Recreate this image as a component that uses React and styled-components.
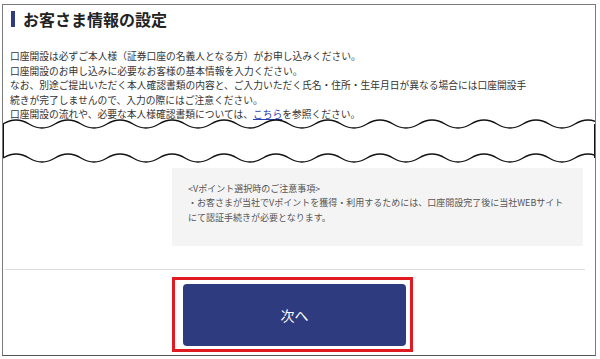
import React from "react";
import styled, { createGlobalStyle } from "styled-components";

const GlobalStyle = createGlobalStyle`
  html, body {
    margin: 0;
    padding: 0;
    background: #ffffff;
  }
  body {
    font-family: "Noto Sans CJK JP", "Noto Sans", sans-serif;
    color: #333333;
  }
`;

const Frame = styled.div`
  box-sizing: border-box;
  margin: 4px 0 0 2px;
  width: 594px;
  height: 352px;
  border: 1px solid #7a7a7a;
  border-bottom-color: #555555;
  background: #ffffff;
  overflow: hidden;
`;

const TopSection = styled.section`
  padding: 6px 0 0 7px;
`;

const Heading = styled.h1`
  display: flex;
  align-items: center;
  gap: 8px;
  margin: 0 0 22px;
  font-size: 16px;
  line-height: 16px;
  font-weight: 700;
  color: #222222;
  &::before {
    content: "";
    display: block;
    width: 4px;
    height: 16px;
    margin-left: 1px;
    background: #2e3b7e;
  }
`;

const Lead = styled.div`
  font-size: 9.75px;
  line-height: 14.5px;
  white-space: nowrap;
  color: #333333;
  p {
    margin: 0;
  }
`;

const TextLink = styled.a`
  color: #2f3fb0;
  text-decoration: underline;
`;

const BreakSvg = styled.svg`
  display: block;
  margin-top: -8px;
  position: relative;
`;

const BottomSection = styled.section`
  display: flex;
  flex-direction: column;
`;

const NoteBox = styled.div`
  margin-left: 169px;
  width: 411px;
  box-sizing: border-box;
  padding: 14px 0 21px 16px;
  background: #f4f4f4;
  font-size: 9px;
  line-height: 14.5px;
  color: #555555;
  white-space: nowrap;
  p {
    margin: 0;
  }
`;

const Divider = styled.hr`
  margin: 23px 10px 0 2px;
  border: 0;
  border-top: 1px solid #dddddd;
`;

const Highlight = styled.div`
  box-sizing: border-box;
  margin: 7px 0 0 169px;
  width: 241px;
  height: 75px;
  border: 3px solid #e01b22;
  padding: 4px 4px 3px 8px;
`;

const NextButton = styled.button`
  width: 223px;
  height: 62px;
  border: 0;
  border-radius: 4px;
  background: #2e3b7e;
  color: #ffffff;
  font-family: "Noto Sans CJK JP", sans-serif;
  font-size: 14px;
  cursor: pointer;
`;

const W = 592;
const H = 54;
const P = 52;
const A = 4;

// builds a sine-like wave as chained quadratic arches
function waveSegments(y, from, to) {
  const step = P / 2;
  const sign = to > from ? 1 : -1;
  const n = Math.ceil(Math.abs(to - from) / step);
  let d = "";
  for (let i = 0; i < n; i++) {
    const x0 = from + sign * i * step;
    const x1 = x0 + sign * step;
    const k = Math.floor(Math.min(x0, x1) / step + 0.5);
    const dir = k % 2 === 0 ? -1 : 1;
    d += ` Q${(x0 + x1) / 2} ${y + dir * 2 * A} ${x1} ${y}`;
  }
  return d;
}

const PageBreak = () => {
  const top = 10;
  const bottom = 44;
  const end = Math.ceil(W / P) * P;
  const topLine = `M0 ${top}${waveSegments(top, 0, end)}`;
  const bottomLine = `M0 ${bottom}${waveSegments(bottom, 0, end)}`;
  const fill = `${topLine} L${end} ${bottom}${waveSegments(bottom, end, 0)} Z`;
  return (
    <BreakSvg width={W} height={H} viewBox={`0 0 ${W} ${H}`}>
      <path d={fill} fill="#ffffff" />
      <path d={topLine} fill="none" stroke="#111111" strokeWidth="1.4" />
      <path d={bottomLine} fill="none" stroke="#111111" strokeWidth="1.4" />
      <line x1="0.5" y1={top} x2="0.5" y2={bottom} stroke="#111111" />
      <line x1={W - 0.5} y1={top} x2={W - 0.5} y2={bottom} stroke="#111111" />
    </BreakSvg>
  );
};

export default function App() {
  return (
    <>
      <GlobalStyle />
      <Frame>
        <TopSection>
          <Heading>お客さま情報の設定</Heading>
          <Lead>
            <p>口座開設は必ずご本人様（証券口座の名義人となる方）がお申し込みください。</p>
            <p>口座開設のお申し込みに必要なお客様の基本情報を入力ください。</p>
            <p>
              なお、別途ご提出いただく本人確認書類の内容と、ご入力いただく氏名・住所・生年月日が異なる場合には口座開設手
              <br />
              続きが完了しませんので、入力の際にはご注意ください。
            </p>
            <p>
              口座開設の流れや、必要な本人様確認書類については、<TextLink href="#">こちら</TextLink>を参照ください。
            </p>
          </Lead>
        </TopSection>
        <PageBreak />
        <BottomSection>
          <NoteBox>
            <p>&lt;Vポイント選択時のご注意事項&gt;</p>
            <p>・お客さまが当社でVポイントを獲得・利用するためには、口座開設完了後に当社WEBサイト</p>
            <p>にて認証手続きが必要となります。</p>
          </NoteBox>
          <Divider />
          <Highlight>
            <NextButton>次へ</NextButton>
          </Highlight>
        </BottomSection>
      </Frame>
    </>
  );
}
